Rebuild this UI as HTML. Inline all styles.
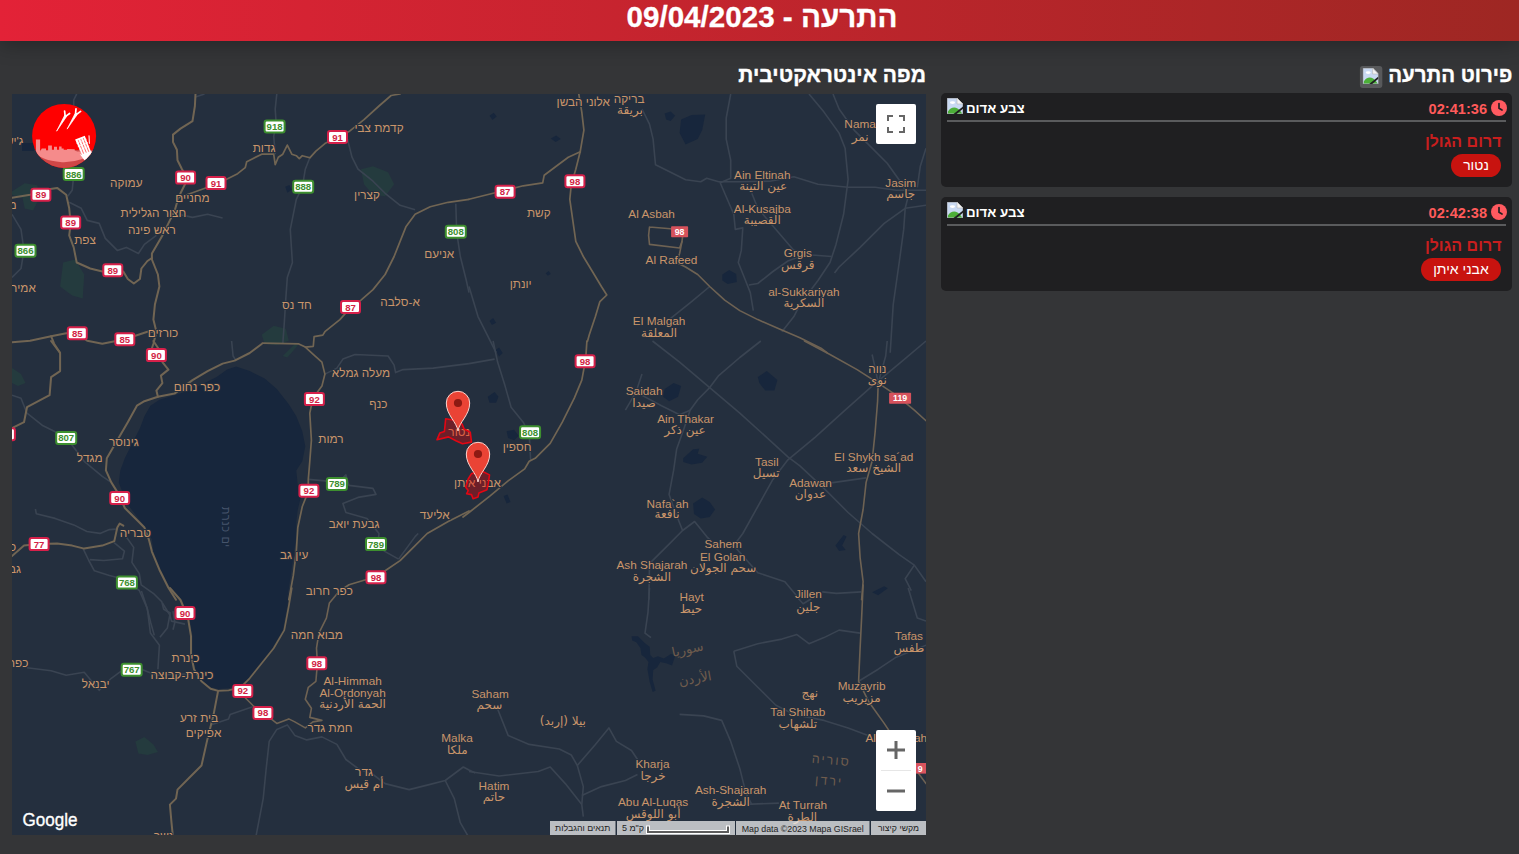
<!DOCTYPE html>
<html lang="he" dir="rtl">
<head>
<meta charset="utf-8">
<title>התרעה - 09/04/2023</title>
<style>
*{box-sizing:border-box;margin:0;padding:0}
html,body{width:1519px;height:854px;overflow:hidden}
body{background:#343537;font-family:"Liberation Sans","DejaVu Sans",sans-serif;color:#fff;position:relative}
#hdr{position:absolute;left:0;top:0;width:1519px;height:41px;background:linear-gradient(90deg,#e32237,#9e2723);box-shadow:0 4px 20px rgba(0,0,0,.28);z-index:5}
#hdr h1{-webkit-text-stroke:.3px #fff;position:absolute;left:0;top:0px;width:1524px;transform:scaleX(1.02);text-align:center;font-size:29px;font-weight:bold;line-height:34px;letter-spacing:0;color:#fff;direction:rtl;white-space:nowrap}
h2{position:absolute;-webkit-text-stroke:.35px #fff;font-size:21px;font-weight:bold;line-height:26px;color:#fff;white-space:nowrap;direction:rtl}
#t-map{right:593px;top:61.5px}
#t-det{right:7px;top:61.5px;transform:scaleX(.975);transform-origin:100% 50%}
.bib{position:absolute;left:-29px;top:4px;width:23px;height:22px;background:#58595b;border-radius:3px}
.bib .bi{position:absolute;left:3px;top:2px}
#map{position:absolute;left:12px;top:94px;width:914px;height:741px;background:#242f3e;overflow:hidden}
#map svg{position:absolute;left:0;top:0}
.card{position:absolute;left:941px;width:571px;background:#1f1f21;border-radius:5px}
.card .hd{position:absolute;left:6px;right:6px;top:0;height:29px;border-bottom:2px solid #5a5b5d}
.card .hd .bi{position:absolute;left:0;top:5px}
.card .clk{position:absolute;right:-1px;top:7px}
.card .tm{position:absolute;right:19px;top:7px;font-size:14.6px;font-weight:bold;color:#ff5a5a;line-height:18px;direction:ltr}
.card .ty{position:absolute;left:19px;top:7px;font-size:13.3px;font-weight:bold;color:#fff;line-height:18px;white-space:nowrap}
.card .ar{position:absolute;right:10.5px;top:39px;font-size:16px;font-weight:bold;color:#c81e1e;line-height:20px;white-space:nowrap}
.card .pill{position:absolute;right:11px;top:61px;height:23px;border-radius:12px;background:#c8130f;color:#fff;font-size:14px;line-height:23px;text-align:center;white-space:nowrap}
</style>
</head>
<body>
<div id="hdr"><h1>התרעה - 09/04/2023</h1></div>
<h2 id="t-map">מפה אינטראקטיבית</h2>
<h2 id="t-det">פירוט התרעה<span class="bib"><svg class="bi" width="16" height="16" viewBox="0 0 16 16"><path d="M0 0H10L16 6V16H0Z" fill="#c9d9f2"/><path d="M0 0H10L16 6V16H0Z" fill="none" stroke="#9a9a9a" stroke-width="1"/><path d="M10 0V6H16Z" fill="#f4f4f4" stroke="#b5b5b5" stroke-width=".6"/><ellipse cx="5.5" cy="4.6" rx="2.6" ry="1.3" fill="#fff"/><path d="M1 15.5V13.5C3 10 7 8.5 10.5 10.5C12.5 11.7 14 13.5 15 15.5Z" fill="#4caf38"/><path d="M6.5 16L16 8.5V10.8L9.6 16Z" fill="#1f1f21"/></svg></span></h2>
<div id="map">
<svg width="914" height="741" viewBox="12 94 914 741" direction="ltr">
<g id="water" fill="#17263c">
<path d="M236.1 366.6 L249.7 371.1 L264.7 378.6 L276.8 389.1 L288.8 404.2 L296.3 416.2 L302.3 431.3 L305.3 446.3 L302.3 461.3 L296.3 470.4 L297.8 485.4 L300.8 497.4 L297.8 509.5 L296.3 521.5 L296.3 536.6 L293.3 557.6 L290.3 578.7 L287.3 597.9 L290.3 588.0 L287.3 606.1 L282.8 630.1 L272.2 648.2 L260.2 663.2 L248.2 678.3 L239.1 685.8 L228.6 688.2 L218.1 689.1 L209.1 686.7 L200.9 679.8 L195.5 669.2 L192.5 654.2 L192.5 636.1 L189.5 618.1 L182.0 600.0 L171.5 588.0 L168.4 584.7 L159.4 566.6 L153.4 551.6 L151.9 539.6 L145.9 527.5 L138.4 518.5 L129.3 506.5 L123.3 494.4 L118.8 482.4 L120.3 470.4 L124.8 458.3 L132.3 443.3 L139.9 428.2 L144.4 416.2 L150.4 405.7 L159.4 399.7 L174.5 395.2 L189.5 390.6 L204.5 383.1 L216.6 377.1 L227.1 369.6Z"/>
<path d="M285.2 186.7 L289.4 184.9 L291.8 189.7 L287.3 192.7Z"/>
<path d="M681.1 119.6 L691.6 115.1 L705.2 114.5 L702.2 130.1 L697.7 139.1 L685.6 144.5 L679.6 133.1Z"/>
<path d="M664.6 113.6 L670.6 111.4 L675.1 115.7 L670.6 121.1 L666.1 119.6Z"/>
<path d="M489.5 115.7 L493.7 112.7 L496.7 116.6 L492.5 119.9Z"/>
<path d="M550.8 138.5 L556.2 135.5 L560.8 139.1 L555.6 142.1Z"/>
<path d="M722.3 274.5 L729.2 270.0 L736.2 273.9 L736.8 282.0 L727.7 284.1 L722.3 280.5Z"/>
<path d="M545.7 273.3 L548.7 270.9 L550.8 273.9 L547.8 275.7Z"/>
<path d="M489.5 321.1 L493.1 318.1 L496.1 322.7 L491.9 325.1Z"/>
<path d="M664.6 389.1 L673.6 383.1 L681.1 386.1 L678.1 396.7 L669.1 401.2 L663.1 396.7Z"/>
<path d="M757.8 377.1 L766.8 371.1 L777.4 380.1 L774.4 390.6 L765.3 390.6 L759.3 383.1Z"/>
<path d="M683.2 458.3 L693.1 449.3 L699.2 448.7 L697.7 453.8 L707.3 456.8 L702.2 462.8 L691.6 464.4 L683.2 461.9Z"/>
<path d="M693.1 503.5 L702.2 497.4 L709.7 502.0 L715.1 509.5 L709.7 517.0 L700.7 518.5 L694.0 514.0Z"/>
<path d="M835.4 545.6 L843.6 535.1 L846.6 536.6 L842.1 545.6 L845.7 550.1 L839.1 551.0Z"/>
<path d="M487.7 396.7 L494.6 392.1 L498.5 396.7 L496.1 402.7 L489.5 402.7Z"/>
<path d="M495.5 350.0 L499.1 347.6 L502.7 353.0 L499.1 356.6Z"/>
<path d="M506.6 431.3 L514.1 429.8 L518.6 435.8 L514.1 440.3 L508.1 437.9Z"/>
<path d="M503.6 495.9 L507.5 494.4 L510.5 502.0 L506.6 503.5Z"/>
<path d="M872.1 592.2 L884.2 586.2 L887.8 588.3 L878.2 595.2Z"/>
<path d="M631.6 636.3 L638.0 636.3 L645.0 643.3 L649.7 646.8 L650.3 655.0 L653.2 658.0 L657.9 656.2 L663.8 658.5 L670.8 653.9 L675.5 655.0 L672.0 665.6 L666.1 663.2 L660.3 662.1 L657.3 667.3 L653.2 670.3 L652.6 679.6 L655.6 690.7 L652.6 691.9 L649.7 682.0 L647.4 669.1 L648.5 662.1 L645.0 657.4 L641.5 655.0 L640.4 648.0 L636.3 642.2 L632.2 640.4Z"/>
</g>
<g fill="none" stroke="#17263c" stroke-width="3.5" stroke-linecap="round" stroke-linejoin="round">
</g>
<g id="parks" fill="#243b3e">
<path d="M361.0 169.2 L373.0 166.2 L388.1 172.2 L394.1 184.3 L385.1 196.3 L373.0 194.8 L364.0 184.3Z"/>
<path d="M63.1 262.5 L75.2 259.5 L84.2 274.5 L82.7 298.6 L72.2 295.6 L60.1 286.5Z"/>
<path d="M12.0 191.6 L24.7 183.2 L37.3 185.3 L39.4 198.0 L33.1 210.6 L24.7 208.5 L22.5 198.0 L12.0 194.8Z"/>
<path d="M261.7 334.7 L273.7 325.7 L285.8 328.7 L288.8 340.7 L276.8 345.2 L264.7 343.7Z"/>
<path d="M12.0 368.1 L21.0 374.1 L25.5 383.1 L18.0 386.1 L12.0 383.1Z"/>
<path d="M282.8 356.0 L294.8 344.0 L297.8 345.5 L287.3 357.5Z"/>
<path d="M135.4 741.4 L144.4 736.9 L153.4 744.4 L157.9 752.0 L147.4 755.0 L138.4 753.5Z"/>
</g>
<g id="minor" fill="none" stroke="#3a4452" stroke-width="1.6" stroke-linejoin="round">
<path d="M276.8 94.0 L275.2 109.0 L276.2 124.1 L273.7 136.1 L275.2 154.2"/>
<path d="M309.8 157.8 L305.3 169.2 L302.3 187.3 L296.3 199.3 L293.3 214.3 L290.3 229.4 L291.2 244.4 L292.4 262.5 L287.3 277.5 L285.8 298.6 L284.3 322.7 L282.8 343.7"/>
<path d="M455.8 203.8 L456.7 232.4 L460.3 256.5 L466.3 280.5 L469.0 292.6"/>
<path d="M347.5 139.1 L352.0 157.2 L358.0 169.2 L373.0 181.2 L385.1 193.3 L400.1 205.3 L415.1 209.8"/>
<path d="M76.7 94.0 L73.7 100.0 L73.7 175.2 L72.2 190.3 L67.7 196.3"/>
<path d="M69.2 202.3 L81.2 208.3 L87.2 220.4 L99.2 223.4 L105.3 238.4 L117.3 250.4 L126.3 247.4 L138.4 253.5 L144.4 244.4 L156.4 235.4"/>
<path d="M178.4 214.3 L192.5 217.4 L207.6 214.3 L222.6 218.0"/>
<path d="M12.0 214.3 L21.0 229.4 L24.0 250.4 L21.0 268.5 L12.0 277.5"/>
<path d="M195.5 97.0 L204.5 94.0"/>
<path d="M642.0 109.0 L649.5 124.1 L653.1 139.1 L655.5 164.7 L673.6 173.7 L685.6 179.7 L700.7 181.8 L706.7 178.2 L718.7 181.8 L739.8 181.8 L769.9 181.2 L793.9 176.7 L818.0 184.3 L848.1 187.3 L875.2 187.3 L896.2 190.3 L926.0 190.3"/>
<path d="M730.7 94.0 L726.2 118.1 L726.2 139.1 L730.7 160.2 L730.7 178.2 L720.2 182.8 L724.7 193.3 L733.8 214.3 L735.3 229.4 L742.8 227.9 L741.3 250.4 L738.3 262.5 L744.3 277.5 L750.3 292.6 L753.3 310.6"/>
<path d="M809.0 94.0 L824.0 112.1 L839.1 133.1 L845.1 148.2 L848.1 179.7 L843.6 214.3 L836.0 244.4 L830.0 262.5 L818.0 280.5 L799.9 304.6 L793.9 316.6 L781.9 331.7"/>
<path d="M833.0 94.0 L839.1 109.0 L854.1 130.1 L869.1 145.1 L887.2 163.2 L902.2 184.3 L908.2 196.3 L905.2 208.3"/>
<path d="M751.8 193.3 L757.8 208.3 L775.9 229.4 L793.9 250.4 L812.0 255.0 L831.5 256.5"/>
<path d="M905.2 208.3 L884.2 223.4 L860.1 247.4 L839.1 267.0 L834.5 273.0"/>
<path d="M905.2 208.3 L903.7 229.4 L899.2 262.5 L893.2 304.6 L890.2 352.7"/>
<path d="M905.2 208.3 L926.0 205.3"/>
<path d="M926.0 148.2 L920.3 166.2 L917.3 187.3"/>
<path d="M748.8 285.0 L757.8 283.5 L772.9 271.5 L787.9 261.0 L799.9 256.5"/>
<path d="M709.7 286.5 L691.6 301.6 L676.6 313.6 L661.5 325.7"/>
<path d="M469.0 286.5 L478.0 316.6 L490.1 340.7 L496.1 352.7"/>
<path d="M12.0 395.2 L21.0 398.2 L27.0 413.2 L42.1 425.2 L66.2 437.3 L84.2 461.3 L102.3 476.4 L111.3 482.4"/>
<path d="M308.3 479.4 L324.9 480.9 L336.9 483.9 L345.9 474.9 L349.0 485.4 L373.0 488.4 L376.0 494.4 L358.0 497.4 L342.9 503.5 L345.9 512.5 L367.0 518.5 L379.0 533.5 L377.5 545.6 L385.1 551.6 L398.6 559.1"/>
<path d="M324.9 374.1 L336.9 368.1 L342.9 359.1 L355.0 354.5 L388.1 356.0 L394.1 365.1 L395.6 372.6 L403.1 369.6 L433.2 368.1 L469.0 363.6"/>
<path d="M398.6 559.1 L415.1 536.6 L418.2 533.5"/>
<path d="M231.6 341.0 L233.1 356.0 L236.1 360.6"/>
<path d="M35.4 509.0 L36.3 513.7 L55.1 518.4 L73.8 524.9 L86.9 531.5 L100.0 533.4 L109.4 529.6 L115.9 529.1"/>
<path d="M83.2 548.9 L88.8 560.5 L94.4 570.8 L109.4 575.5 L124.4 579.3 L139.3 590.5 L146.8 607.3 L150.6 622.3 L154.3 635.4"/>
<path d="M114.1 542.7 L124.4 551.2 L122.5 558.7 L103.8 560.5 L89.7 559.6"/>
<path d="M124.4 534.3 L133.7 547.4 L131.9 562.4 L139.3 573.6 L141.2 584.9 L154.3 594.2 L161.8 601.7 L163.7 609.2 L170.2 613.0 L167.4 627.9 L159.9 637.3"/>
<path d="M173.0 611.1 L174.9 622.3 L173.0 629.8"/>
<path d="M652.5 341.0 L679.6 362.1 L709.7 387.6 L739.8 413.2 L769.9 440.3 L787.9 456.8 L799.9 465.9 L824.0 488.4 L848.1 512.5 L872.1 533.5 L899.2 554.6 L914.3 565.1 L926.0 581.7"/>
<path d="M760.8 341.0 L739.8 357.5 L718.7 375.6 L709.7 387.6 L697.7 399.7 L690.1 410.2 L684.1 428.2 L676.6 449.3 L673.6 470.4 L669.1 494.4 L676.6 515.5 L682.6 530.5"/>
<path d="M926.0 341.0 L899.2 363.6 L872.1 386.1 L845.1 410.2 L815.0 437.3 L787.9 459.8 L772.9 479.4 L757.8 506.5 L742.8 533.5 L733.8 545.6"/>
<path d="M642.0 374.1 L636.0 392.1 L625.4 410.2"/>
<path d="M636.0 392.1 L661.5 405.7 L679.6 414.7 L690.1 410.2"/>
<path d="M649.5 563.6 L667.6 545.6 L682.6 530.5 L694.6 521.5 L706.7 536.6 L718.7 548.6"/>
<path d="M824.0 483.9 L845.1 480.9 L866.1 477.9"/>
<path d="M887.2 341.0 L885.7 356.0 L878.2 383.1"/>
<path d="M872.1 354.5 L875.2 368.1 L878.2 383.1"/>
<path d="M493.1 341.0 L497.6 362.1 L505.1 386.1 L511.1 407.2 L523.2 422.2 L529.2 434.3 L530.7 461.3"/>
<path d="M469.0 363.6 L494.6 359.1"/>
<path d="M733.8 545.6 L757.8 572.7 L784.9 581.7 L799.9 599.7"/>
<path d="M914.3 565.1 L905.2 578.7 L911.3 590.7"/>
<path d="M649.5 563.6 L648.9 599.7"/>
<path d="M795.1 595.0 L803.1 603.8 L811.0 599.0"/>
<path d="M822.2 591.9 L836.5 593.4 L861.2 591.9"/>
<path d="M27.0 667.7 L51.1 670.7 L66.2 675.2 L84.2 672.2 L99.2 690.3 L111.3 678.3 L121.8 670.7 L141.4 669.2 L156.4 675.2 L191.0 673.7"/>
<path d="M141.4 591.0 L147.4 609.1 L150.4 633.1 L159.4 645.2 L157.9 669.2"/>
<path d="M162.4 603.0 L169.9 615.1 L171.5 621.1 L185.0 624.1"/>
<path d="M210.6 724.9 L228.6 718.9 L230.1 714.4 L252.7 706.8"/>
<path d="M255.7 837.7 L263.2 798.6 L266.2 768.5 L269.2 741.4 L276.8 729.4 L287.3 724.9 L294.8 735.4 L306.8 739.9 L321.9 736.9 L336.9 744.4 L345.9 759.5 L358.0 768.5 L373.0 774.5 L385.1 783.6 L409.1 789.6 L427.2 785.1 L445.2 780.5 L463.3 767.0 L469.0 770.0 L475.3 773.0"/>
<path d="M445.2 780.5 L454.3 798.6 L460.3 822.7 L469.0 837.7"/>
<path d="M649.5 588.0 L648.0 612.1 L645.0 633.1 L651.0 637.6"/>
<path d="M733.8 651.2 L757.8 643.7 L781.9 639.1 L796.9 634.6 L809.0 643.7 L824.0 637.6 L839.1 630.1 L860.1 633.1"/>
<path d="M733.8 651.2 L736.8 666.2 L757.8 687.3 L775.9 705.3 L793.9 714.4 L824.0 720.4 L848.1 727.9 L872.1 736.9"/>
<path d="M679.6 714.4 L703.7 715.9 L721.7 720.4 L730.7 741.4 L739.8 768.5 L745.8 792.6 L751.8 804.6"/>
<path d="M858.6 681.3 L878.2 669.2 L896.2 657.2 L926.0 645.2"/>
<path d="M496.1 705.3 L508.1 735.4 L529.2 744.4 L559.3 749.0 L571.3 755.0 L577.3 765.5 L583.3 786.6 L581.8 804.6 L583.3 816.7"/>
<path d="M469.0 771.5 L499.1 776.0 L538.2 771.5 L550.2 767.0 L565.3 783.6 L581.8 804.6"/>
<path d="M581.8 795.6 L601.4 786.6 L625.4 780.5 L637.5 774.5"/>
<path d="M577.3 765.5 L595.4 744.4 L608.9 727.9 L616.4 741.4 L631.5 750.5 L637.5 759.5"/>
<path d="M739.8 804.6 L778.9 803.1"/>
<path d="M908.2 588.0 L917.3 618.1 L926.0 621.1"/>
</g>
<g id="major" fill="none" stroke="#716553" stroke-width="2.0" stroke-linejoin="round" stroke-linecap="round">
<path d="M195.5 94.0 L194.9 106.0 L192.5 121.1 L180.5 128.6 L173.0 134.6 L173.0 142.1 L176.9 149.7 L177.5 160.2 L182.0 169.2 L186.5 176.7 L185.0 184.3 L180.5 193.3 L178.4 197.8 L174.5 211.3 L168.4 223.4 L162.4 235.4 L151.9 253.5 L151.9 259.5 L157.9 274.5 L159.4 286.5 L154.9 304.6 L153.4 319.6 L156.4 331.7 L153.4 343.7 L150.4 352.7"/>
<path d="M12.0 197.8 L30.1 194.8 L42.1 190.3 L57.1 187.9 L66.2 194.8 L69.2 208.3 L70.7 223.4 L69.2 235.4 L73.7 247.4 L76.7 262.5 L90.2 268.5 L102.3 271.5 L112.8 270.0 L123.3 271.5 L127.8 279.0 L133.8 283.5 L139.9 279.0 L141.4 268.5 L147.4 261.0 L151.9 258.0"/>
<path d="M12.0 342.2 L30.1 340.7 L51.1 336.2 L66.2 333.2 L76.7 333.2 L87.2 340.7 L102.3 343.7 L124.8 339.2 L138.4 334.7 L147.4 331.7 L154.9 331.7"/>
<path d="M51.1 336.2 L54.1 343.7 L60.1 352.7"/>
<path d="M153.4 341.0 L159.4 350.0 L162.4 362.1 L168.4 369.6 L160.9 375.6 L162.4 383.1 L156.4 390.6 L157.9 396.7 L144.4 401.2 L136.9 405.7 L127.8 422.2 L117.3 440.3 L106.8 458.3 L105.9 470.4 L111.3 482.4 L118.8 494.4 L124.8 508.0 L135.4 518.5 L144.4 527.5 L148.9 539.6 L151.9 551.6 L159.4 569.7 L168.4 587.7 L176.0 599.7"/>
<path d="M157.9 396.7 L174.5 393.6 L192.5 380.1 L207.6 371.1 L222.6 363.6 L234.6 360.6 L249.7 353.0 L261.7 344.0"/>
<path d="M51.1 341.0 L60.1 353.0 L60.1 371.1 L51.1 377.1 L49.6 395.2 L27.0 407.2 L24.0 422.2 L12.0 428.2"/>
<path d="M12.0 556.1 L24.0 545.6 L39.1 544.1 L57.1 543.5 L72.2 545.6 L84.2 548.6 L102.3 545.6 L114.3 541.1 L117.3 527.5 L119.7 523.6 L123.3 525.7"/>
<path d="M169.9 588.0 L180.5 600.0 L188.0 618.1 L191.0 636.1 L191.0 654.2 L194.0 669.2 L201.5 681.3 L210.6 688.8 L218.1 690.9"/>
<path d="M218.1 690.9 L213.6 714.4 L207.6 738.4 L201.5 765.5 L189.5 777.5 L177.5 789.6 L176.0 798.6 L169.9 804.6 L171.5 822.7 L173.0 837.7"/>
</g>
<g id="major2" fill="none" stroke="#716553" stroke-width="1.7" stroke-linejoin="round" stroke-linecap="round">
<path d="M178.4 197.8 L192.5 192.7 L207.6 187.3 L222.6 181.2 L237.6 173.7 L245.2 167.7 L246.7 161.7 L252.7 158.7 L261.7 154.2 L273.7 154.2 L275.2 164.7 L278.3 157.2 L282.8 154.2 L287.3 145.1 L291.8 154.2 L296.3 155.7 L299.3 158.7 L302.3 155.7 L309.8 157.8 L315.9 151.2 L324.9 143.6 L336.9 137.6 L349.0 131.6 L364.0 119.6 L379.0 106.0 L391.1 95.5 L400.1 94.0"/>
<path d="M469.0 199.3 L448.2 202.3 L430.2 206.8 L415.1 214.3 L406.1 226.4 L400.1 241.4 L394.1 256.5 L385.1 274.5 L373.0 289.6 L361.0 300.1 L350.5 307.6 L339.9 319.6 L324.9 331.7 L322.8 335.1 L314.1 336.7 L313.3 346.3 L305.3 347.1 L298.9 343.9 L262.3 343.1"/>
<path d="M578.8 94.0 L581.8 112.1 L583.9 130.1 L580.3 151.2 L575.8 169.2 L571.3 184.3 L569.8 199.3 L572.8 220.4 L575.8 241.4 L583.3 256.5 L592.4 271.5 L601.4 286.5 L606.8 295.0 L599.9 301.6 L595.4 316.6 L589.3 334.7 L587.5 341.3"/>
<path d="M469.0 199.3 L487.1 194.8 L505.1 190.3 L523.2 185.8 L542.7 182.8 L544.2 175.2 L556.2 166.2 L568.3 157.2 L580.3 151.8"/>
<path d="M305.3 347.1 L314.9 355.8 L321.9 362.1 L324.9 374.1 L321.9 386.1 L312.9 398.2 L309.8 413.2 L311.4 440.3 L309.8 461.3 L308.3 479.4 L308.3 491.4 L302.3 506.5 L297.8 527.5 L296.3 551.6 L293.3 575.7 L288.8 599.7"/>
<path d="M469.0 511.0 L448.2 521.5 L427.2 533.5 L412.1 548.6 L400.1 560.6 L386.6 569.7 L376.0 577.2 L364.0 580.2 L349.0 584.7 L339.9 590.7 L336.9 594.0"/>
<path d="M586.9 341.0 L585.7 359.1 L581.8 380.1 L574.3 398.2 L562.3 422.2 L550.2 443.3 L535.2 458.3 L529.2 461.3 L524.7 468.9 L508.1 480.9 L490.1 495.9 L469.0 512.5 L463.0 517.0"/>
<path d="M291.8 588.0 L288.8 606.1 L284.3 630.1 L273.7 648.2 L261.7 663.2 L249.7 678.3 L240.7 687.3 L228.6 690.3 L218.1 690.9"/>
</g>
<g id="major3" fill="none" stroke="#6e6253" stroke-width="1.6" stroke-linejoin="round" stroke-linecap="round">
<path d="M649.5 227.0 L670.6 228.8 L683.2 231.8 L682.0 241.4 L679.6 248.0 L649.5 244.4 L648.6 235.4 L649.5 227.0"/>
<path d="M682.0 241.4 L679.6 253.5 L676.6 262.5 L685.6 267.0 L697.7 274.5 L709.7 286.5 L724.7 300.1 L739.8 310.6 L757.8 319.6 L778.9 328.7 L799.9 337.7 L821.0 348.2 L827.0 352.7"/>
<path d="M804.5 341.0 L830.0 354.5 L857.1 369.6 L878.2 383.1 L896.2 395.2 L914.3 410.2 L926.0 420.7"/>
<path d="M878.2 383.1 L877.6 401.2 L875.2 431.3 L872.1 461.3 L866.1 482.4 L863.1 509.5 L858.6 533.5 L860.1 557.6 L863.1 581.7 L861.6 599.7"/>
<path d="M336.9 594.0 L329.4 603.0 L326.4 618.1 L318.9 633.1 L316.5 648.2 L317.4 663.2 L315.9 681.3 L308.3 687.3 L305.3 699.3 L311.4 708.3 L309.8 717.4 L321.9 720.4 L312.9 721.9 L305.3 727.9 L294.8 721.9 L288.8 718.9 L276.8 723.4 L269.2 717.4 L261.7 712.9 L252.7 705.3 L243.7 696.3 L240.7 688.8"/>
<path d="M863.1 585.0 L861.6 618.1 L860.1 648.2 L858.6 681.3 L869.1 702.3 L884.2 723.4 L890.2 732.4 L908.2 759.5 L926.0 783.6"/>
</g>
<g id="labels" font-size="11.8" fill="#c9956a" text-anchor="middle" stroke="#242f3e" stroke-width="2" paint-order="stroke" stroke-linejoin="round">
<text x="126.3" y="187.0" font-family="Liberation Sans,sans-serif">עמוקה</text>
<text x="192.5" y="202.0" font-family="Liberation Sans,sans-serif">מחניים</text>
<text x="153.4" y="217.0" font-family="Liberation Sans,sans-serif">חצור הגלילית</text>
<text x="151.9" y="234.2" font-family="Liberation Sans,sans-serif">ראש פינה</text>
<text x="85.1" y="244.1" font-family="Liberation Sans,sans-serif">צפת</text>
<text x="264.1" y="151.5" font-family="Liberation Sans,sans-serif">גדות</text>
<text x="379.0" y="131.9" font-family="Liberation Sans,sans-serif">קדמת צבי</text>
<text x="367.0" y="199.3" font-family="Liberation Sans,sans-serif">קצרין</text>
<text x="439.2" y="257.7" font-family="Liberation Sans,sans-serif">אניעם</text>
<text x="296.9" y="308.8" font-family="Liberation Sans,sans-serif">חד נס</text>
<text x="400.1" y="305.8" font-family="Liberation Sans,sans-serif">א-סלבה</text>
<text x="163.0" y="337.4" font-family="Liberation Sans,sans-serif">כורזים</text>
<text x="23.4" y="291.7" font-family="Liberation Sans,sans-serif">אמיר</text>
<text x="14.4" y="145.4" font-family="Liberation Sans,sans-serif">ג'יש</text>
<text x="12.6" y="208.9" font-family="Liberation Sans,sans-serif">מ</text>
<text x="583.3" y="105.7" font-family="Liberation Sans,sans-serif">אלוני הבשן</text>
<text x="629.1" y="102.7" font-family="Liberation Sans,sans-serif">בריקה</text>
<text x="630.0" y="114.0" font-family="DejaVu Sans,sans-serif" font-size="12">بريقة</text>
<text x="762.3" y="178.8" font-family="Liberation Sans,sans-serif" font-size="11.8">Ain Eltinah</text>
<text x="763.2" y="189.9" font-family="DejaVu Sans,sans-serif" font-size="12">عين التينة</text>
<text x="762.3" y="213.1" font-family="Liberation Sans,sans-serif" font-size="11.8">Al-Kusajba</text>
<text x="762.3" y="223.9" font-family="DejaVu Sans,sans-serif" font-size="12">القصيبة</text>
<text x="651.6" y="217.6" font-family="Liberation Sans,sans-serif" font-size="11.8">Al Asbah</text>
<text x="671.5" y="263.7" font-family="Liberation Sans,sans-serif" font-size="11.8">Al Rafeed</text>
<text x="797.8" y="256.5" font-family="Liberation Sans,sans-serif" font-size="11.8">Grgis</text>
<text x="797.8" y="269.0" font-family="DejaVu Sans,sans-serif" font-size="12">قرقس</text>
<text x="803.9" y="295.9" font-family="Liberation Sans,sans-serif" font-size="11.8">al-Sukkariyah</text>
<text x="803.9" y="306.6" font-family="DejaVu Sans,sans-serif" font-size="12">السكرية</text>
<text x="659.1" y="325.3" font-family="Liberation Sans,sans-serif" font-size="11.8">El Malgah</text>
<text x="659.1" y="336.7" font-family="DejaVu Sans,sans-serif" font-size="12">المعلقة</text>
<text x="860.1" y="128.3" font-family="Liberation Sans,sans-serif" font-size="11.8">Nama</text>
<text x="860.1" y="141.1" font-family="DejaVu Sans,sans-serif" font-size="12">نمر</text>
<text x="900.7" y="187.0" font-family="Liberation Sans,sans-serif" font-size="11.8">Jasim</text>
<text x="900.7" y="198.3" font-family="DejaVu Sans,sans-serif" font-size="12">جاسم</text>
<text x="538.8" y="217.0" font-family="Liberation Sans,sans-serif">קשת</text>
<text x="520.7" y="287.7" font-family="Liberation Sans,sans-serif">יונתן</text>
<text x="197.0" y="390.9" font-family="Liberation Sans,sans-serif">כפר נחום</text>
<text x="123.9" y="446.0" font-family="Liberation Sans,sans-serif">גינוסר</text>
<text x="89.6" y="461.6" font-family="Liberation Sans,sans-serif">מגדל</text>
<text x="135.4" y="536.8" font-family="Liberation Sans,sans-serif">טבריה</text>
<text x="361.0" y="376.8" font-family="Liberation Sans,sans-serif">מעלה גמלא</text>
<text x="378.4" y="407.8" font-family="Liberation Sans,sans-serif">כנף</text>
<text x="330.9" y="443.0" font-family="Liberation Sans,sans-serif">רמות</text>
<text x="354.1" y="527.8" font-family="Liberation Sans,sans-serif">גבעת יואב</text>
<text x="294.2" y="559.4" font-family="Liberation Sans,sans-serif">עין גב</text>
<text x="434.7" y="518.8" font-family="Liberation Sans,sans-serif">אליעד</text>
<text x="329.4" y="594.9" font-family="Liberation Sans,sans-serif">כפר חרוב</text>
<text x="9.6" y="551.3" font-family="Liberation Sans,sans-serif">כפ</text>
<text x="15.0" y="572.9" font-family="Liberation Sans,sans-serif">גב</text>
<text x="644.1" y="395.4" font-family="Liberation Sans,sans-serif" font-size="11.8">Saidah</text>
<text x="644.1" y="407.1" font-family="DejaVu Sans,sans-serif" font-size="12">صيدا</text>
<text x="685.6" y="422.8" font-family="Liberation Sans,sans-serif" font-size="11.8">Ain Thakar</text>
<text x="685.0" y="434.2" font-family="DejaVu Sans,sans-serif" font-size="12">عين ذكر</text>
<text x="766.8" y="465.5" font-family="Liberation Sans,sans-serif" font-size="11.8">Tasil</text>
<text x="766.2" y="476.9" font-family="DejaVu Sans,sans-serif" font-size="12">تسيل</text>
<text x="810.5" y="486.6" font-family="Liberation Sans,sans-serif" font-size="11.8">Adawan</text>
<text x="810.5" y="497.9" font-family="DejaVu Sans,sans-serif" font-size="12">عدوان</text>
<text x="873.7" y="460.7" font-family="Liberation Sans,sans-serif" font-size="11.8">El Shykh sa´ad</text>
<text x="873.7" y="472.4" font-family="DejaVu Sans,sans-serif" font-size="12">الشيخ سعد</text>
<text x="667.6" y="507.7" font-family="Liberation Sans,sans-serif" font-size="11.8">Nafa`ah</text>
<text x="667.0" y="518.4" font-family="DejaVu Sans,sans-serif" font-size="12">نافعة</text>
<text x="723.2" y="548.3" font-family="Liberation Sans,sans-serif" font-size="11.8">Sahem</text>
<text x="722.6" y="560.6" font-family="Liberation Sans,sans-serif" font-size="11.8">El Golan</text>
<text x="723.2" y="572.2" font-family="DejaVu Sans,sans-serif" font-size="12">سحم الجولان</text>
<text x="651.9" y="569.3" font-family="Liberation Sans,sans-serif" font-size="11.8">Ash Shajarah</text>
<text x="651.9" y="581.3" font-family="DejaVu Sans,sans-serif" font-size="12">الشجرة</text>
<text x="877.3" y="372.9" font-family="Liberation Sans,sans-serif">נווה</text>
<text x="877.3" y="383.6" font-family="DejaVu Sans,sans-serif" font-size="12">نوى</text>
<text x="517.1" y="450.5" font-family="Liberation Sans,sans-serif">חספין</text>
<text x="459.2" y="435.7" font-family="Liberation Sans,sans-serif">נטור</text>
<text x="477.5" y="487.3" font-family="Liberation Sans,sans-serif">אבני איתן</text>
<text x="316.8" y="639.4" font-family="Liberation Sans,sans-serif">מבוא חמה</text>
<text x="185.6" y="662.0" font-family="Liberation Sans,sans-serif">כינרת</text>
<text x="182.0" y="678.8" font-family="Liberation Sans,sans-serif">כינרת-קבוצה</text>
<text x="95.6" y="687.9" font-family="Liberation Sans,sans-serif">יבנאל</text>
<text x="18.6" y="666.5" font-family="Liberation Sans,sans-serif">כפר</text>
<text x="199.1" y="722.2" font-family="Liberation Sans,sans-serif">בית זרע</text>
<text x="203.6" y="736.9" font-family="Liberation Sans,sans-serif">אפיקים</text>
<text x="352.6" y="684.6" font-family="Liberation Sans,sans-serif" font-size="11.8">Al-Himmah</text>
<text x="352.6" y="696.6" font-family="Liberation Sans,sans-serif" font-size="11.8">Al-Ordonyah</text>
<text x="352.6" y="707.9" font-family="DejaVu Sans,sans-serif" font-size="12">الحمة الأردنية</text>
<text x="330.0" y="731.8" font-family="Liberation Sans,sans-serif">חמת גדר</text>
<text x="364.0" y="775.7" font-family="Liberation Sans,sans-serif">גדר</text>
<text x="364.0" y="787.7" font-family="DejaVu Sans,sans-serif" font-size="12">أم قيس</text>
<text x="457.0" y="742.0" font-family="Liberation Sans,sans-serif" font-size="11.8">Malka</text>
<text x="457.3" y="754.0" font-family="DejaVu Sans,sans-serif" font-size="12">ملكا</text>
<text x="163.9" y="839.5" font-family="Liberation Sans,sans-serif">גשר</text>
<text x="691.6" y="601.2" font-family="Liberation Sans,sans-serif" font-size="11.8">Hayt</text>
<text x="691.0" y="613.2" font-family="DejaVu Sans,sans-serif" font-size="12">حيط</text>
<text x="808.4" y="598.2" font-family="Liberation Sans,sans-serif" font-size="11.8">Jillen</text>
<text x="808.4" y="610.5" font-family="DejaVu Sans,sans-serif" font-size="12">جلين</text>
<text x="908.9" y="640.3" font-family="Liberation Sans,sans-serif" font-size="11.8">Tafas</text>
<text x="908.9" y="652.3" font-family="DejaVu Sans,sans-serif" font-size="12">طفس</text>
<text x="490.1" y="697.5" font-family="Liberation Sans,sans-serif" font-size="11.8">Saham</text>
<text x="489.5" y="709.4" font-family="DejaVu Sans,sans-serif" font-size="12">سحم</text>
<text x="562.9" y="724.8" font-family="DejaVu Sans,sans-serif" font-size="12">بيلا (إربد)</text>
<text x="861.6" y="689.7" font-family="Liberation Sans,sans-serif" font-size="11.8">Muzayrib</text>
<text x="861.6" y="701.6" font-family="DejaVu Sans,sans-serif" font-size="12">مزيريب</text>
<text x="809.9" y="696.8" font-family="DejaVu Sans,sans-serif" font-size="12">نهج</text>
<text x="797.8" y="715.6" font-family="Liberation Sans,sans-serif" font-size="11.8">Tal Shihab</text>
<text x="797.8" y="727.5" font-family="DejaVu Sans,sans-serif" font-size="12">تلشهاب</text>
<text x="652.5" y="768.2" font-family="Liberation Sans,sans-serif" font-size="11.8">Kharja</text>
<text x="653.1" y="780.1" font-family="DejaVu Sans,sans-serif" font-size="12">خرجا</text>
<text x="494.0" y="789.6" font-family="Liberation Sans,sans-serif" font-size="11.8">Hatim</text>
<text x="494.0" y="800.6" font-family="DejaVu Sans,sans-serif" font-size="12">حاتم</text>
<text x="730.7" y="794.4" font-family="Liberation Sans,sans-serif" font-size="11.8">Ash-Shajarah</text>
<text x="730.7" y="805.7" font-family="DejaVu Sans,sans-serif" font-size="12">الشجرة</text>
<text x="653.1" y="805.8" font-family="Liberation Sans,sans-serif" font-size="11.8">Abu Al-Luqas</text>
<text x="653.1" y="817.7" font-family="DejaVu Sans,sans-serif" font-size="12">أبو اللوقس</text>
<text x="802.9" y="809.4" font-family="Liberation Sans,sans-serif" font-size="11.8">At Turrah</text>
<text x="802.3" y="820.8" font-family="DejaVu Sans,sans-serif" font-size="12">الطرة</text>
<text x="896.2" y="741.7" font-family="Liberation Sans,sans-serif" font-size="11.8">Al-Shajarah</text>
</g>
<g id="shields" font-family="Liberation Sans,sans-serif" font-size="9.6" font-weight="bold" text-anchor="middle">
<rect x="63.7" y="168.0" width="20" height="12" rx="2.2" fill="#fff" stroke="#3d8f2f" stroke-width="2"/><text x="73.7" y="177.5" fill="#3d8f2f">886</text>
<rect x="31.4" y="188.8" width="19" height="12" rx="2.2" fill="#fff" stroke="#d6204a" stroke-width="2"/><text x="40.9" y="198.3" fill="#d21f45">89</text>
<rect x="61.2" y="216.5" width="19" height="12" rx="2.2" fill="#fff" stroke="#d6204a" stroke-width="2"/><text x="70.7" y="226.0" fill="#d21f45">89</text>
<rect x="15.5" y="244.7" width="20" height="12" rx="2.2" fill="#fff" stroke="#3d8f2f" stroke-width="2"/><text x="25.5" y="254.2" fill="#3d8f2f">866</text>
<rect x="103.3" y="264.3" width="19" height="12" rx="2.2" fill="#fff" stroke="#d6204a" stroke-width="2"/><text x="112.8" y="273.8" fill="#d21f45">89</text>
<rect x="176.1" y="171.6" width="19" height="12" rx="2.2" fill="#fff" stroke="#d6204a" stroke-width="2"/><text x="185.6" y="181.1" fill="#d21f45">90</text>
<rect x="206.5" y="177.1" width="19" height="12" rx="2.2" fill="#fff" stroke="#d6204a" stroke-width="2"/><text x="216.0" y="186.6" fill="#d21f45">91</text>
<rect x="264.6" y="120.5" width="20" height="12" rx="2.2" fill="#fff" stroke="#3d8f2f" stroke-width="2"/><text x="274.6" y="130.0" fill="#3d8f2f">918</text>
<rect x="293.2" y="180.7" width="20" height="12" rx="2.2" fill="#fff" stroke="#3d8f2f" stroke-width="2"/><text x="303.2" y="190.2" fill="#3d8f2f">888</text>
<rect x="328.0" y="131.0" width="19" height="12" rx="2.2" fill="#fff" stroke="#d6204a" stroke-width="2"/><text x="337.5" y="140.5" fill="#d21f45">91</text>
<rect x="445.8" y="225.8" width="20" height="12" rx="2.2" fill="#fff" stroke="#3d8f2f" stroke-width="2"/><text x="455.8" y="235.3" fill="#3d8f2f">808</text>
<rect x="341.0" y="301.0" width="19" height="12" rx="2.2" fill="#fff" stroke="#d6204a" stroke-width="2"/><text x="350.5" y="310.5" fill="#d21f45">87</text>
<rect x="67.8" y="327.2" width="19" height="12" rx="2.2" fill="#fff" stroke="#d6204a" stroke-width="2"/><text x="77.3" y="336.7" fill="#d21f45">85</text>
<rect x="115.3" y="333.2" width="19" height="12" rx="2.2" fill="#fff" stroke="#d6204a" stroke-width="2"/><text x="124.8" y="342.7" fill="#d21f45">85</text>
<rect x="146.9" y="349.1" width="19" height="12" rx="2.2" fill="#fff" stroke="#d6204a" stroke-width="2"/><text x="156.4" y="358.6" fill="#d21f45">90</text>
<rect x="495.6" y="185.8" width="19" height="12" rx="2.2" fill="#fff" stroke="#d6204a" stroke-width="2"/><text x="505.1" y="195.3" fill="#d21f45">87</text>
<rect x="565.4" y="175.2" width="19" height="12" rx="2.2" fill="#fff" stroke="#d6204a" stroke-width="2"/><text x="574.9" y="184.7" fill="#d21f45">98</text>
<rect x="671.1" y="226.3" width="17" height="11" rx=".8" fill="#d6525c"/><text x="679.6" y="235.0" fill="#fff" font-size="8.8">98</text>
<rect x="56.2" y="431.9" width="20" height="12" rx="2.2" fill="#fff" stroke="#3d8f2f" stroke-width="2"/><text x="66.2" y="441.4" fill="#3d8f2f">807</text>
<rect x="110.2" y="492.0" width="19" height="12" rx="2.2" fill="#fff" stroke="#d6204a" stroke-width="2"/><text x="119.7" y="501.5" fill="#d21f45">90</text>
<rect x="29.6" y="538.1" width="19" height="12" rx="2.2" fill="#fff" stroke="#d6204a" stroke-width="2"/><text x="39.1" y="547.6" fill="#d21f45">77</text>
<rect x="116.9" y="576.6" width="20" height="12" rx="2.2" fill="#fff" stroke="#3d8f2f" stroke-width="2"/><text x="126.9" y="586.1" fill="#3d8f2f">768</text>
<rect x="304.9" y="393.1" width="19" height="12" rx="2.2" fill="#fff" stroke="#d6204a" stroke-width="2"/><text x="314.4" y="402.6" fill="#d21f45">92</text>
<rect x="299.4" y="484.8" width="19" height="12" rx="2.2" fill="#fff" stroke="#d6204a" stroke-width="2"/><text x="308.9" y="494.3" fill="#d21f45">92</text>
<rect x="326.9" y="477.9" width="20" height="12" rx="2.2" fill="#fff" stroke="#3d8f2f" stroke-width="2"/><text x="336.9" y="487.4" fill="#3d8f2f">789</text>
<rect x="366.0" y="538.1" width="20" height="12" rx="2.2" fill="#fff" stroke="#3d8f2f" stroke-width="2"/><text x="376.0" y="547.6" fill="#3d8f2f">789</text>
<rect x="366.5" y="571.2" width="19" height="12" rx="2.2" fill="#fff" stroke="#d6204a" stroke-width="2"/><text x="376.0" y="580.7" fill="#d21f45">98</text>
<rect x="-4.1" y="428.3" width="19" height="12" rx="2.2" fill="#fff" stroke="#d6204a" stroke-width="2"/><text x="5.4" y="437.8" fill="#d21f45">65</text>
<rect x="575.6" y="355.2" width="19" height="12" rx="2.2" fill="#fff" stroke="#d6204a" stroke-width="2"/><text x="585.1" y="364.7" fill="#d21f45">98</text>
<rect x="520.1" y="426.2" width="20" height="12" rx="2.2" fill="#fff" stroke="#3d8f2f" stroke-width="2"/><text x="530.1" y="435.7" fill="#3d8f2f">808</text>
<rect x="889.1" y="392.7" width="22" height="11" rx=".8" fill="#d6525c"/><text x="900.1" y="401.4" fill="#fff" font-size="8.8">119</text>
<rect x="175.5" y="607.0" width="19" height="12" rx="2.2" fill="#fff" stroke="#d6204a" stroke-width="2"/><text x="185.0" y="616.5" fill="#d21f45">90</text>
<rect x="121.7" y="663.8" width="20" height="12" rx="2.2" fill="#fff" stroke="#3d8f2f" stroke-width="2"/><text x="131.7" y="673.3" fill="#3d8f2f">767</text>
<rect x="233.3" y="684.9" width="19" height="12" rx="2.2" fill="#fff" stroke="#d6204a" stroke-width="2"/><text x="242.8" y="694.4" fill="#d21f45">92</text>
<rect x="253.4" y="706.9" width="19" height="12" rx="2.2" fill="#fff" stroke="#d6204a" stroke-width="2"/><text x="262.9" y="716.4" fill="#d21f45">98</text>
<rect x="307.3" y="657.2" width="19" height="12" rx="2.2" fill="#fff" stroke="#d6204a" stroke-width="2"/><text x="316.8" y="666.7" fill="#d21f45">98</text>
</g>
<g id="country" fill="#6f5c4d" text-anchor="middle" font-size="12">
<text x="687.5" y="653.5" font-family="DejaVu Sans,sans-serif" font-size="13.2" transform="rotate(-12 688.5 649.5)">سوريا</text>
<text x="695.2" y="683" font-family="DejaVu Sans,sans-serif" font-size="13.2" transform="rotate(-10 695.2 679)">الأردن</text>
<text x="831.3" y="764.5" font-family="Liberation Sans,sans-serif" font-size="12.5" letter-spacing="2" transform="rotate(5 831.3 760)">סוריה</text>
<text x="829.2" y="785" font-family="Liberation Sans,sans-serif" font-size="12.5" letter-spacing="2" transform="rotate(5 829.2 780.6)">ירדן</text>
</g>
<text x="225.7" y="531" transform="rotate(90 225.7 527.3)" text-anchor="middle" font-family="Liberation Sans,sans-serif" font-size="11" letter-spacing=".7" fill="#46546b">ים כנרת</text>
<g id="polys" fill="rgba(255,0,0,0.33)" stroke="#e30613" stroke-width="1.6" stroke-linejoin="round">
<path d="M445.7 418.7L453 420L462.1 424.1L464.1 429L470.3 432.3L471.5 442.1L462.5 443.8L455.9 440.8L448.5 436.9L437 439.7L439.8 433.1L444.4 431.5Z"/>
<path d="M471.5 473.6L482.1 471.3L489.5 474.9L488.4 483.1L487 489.7L478.9 493L478 497L473.1 498.7L471.5 494.6L466.6 493.8L468.2 490.5L465.7 487.2L468.2 479Z"/>
</g>
<g id="pins">
<g transform="translate(458 431)"><path d="M0 0C-1.2-9-11.7-16-11.7-28A11.7 11.7 0 1 1 11.7-28C11.7-16 1.2-9 0 0Z" fill="#ea4335" stroke="#fbd5cf" stroke-width="1"/><circle cx="0" cy="-28" r="4.1" fill="#8d1a13"/></g>
<g transform="translate(478 482)"><path d="M0 0C-1.2-9-11.7-16-11.7-28A11.7 11.7 0 1 1 11.7-28C11.7-16 1.2-9 0 0Z" fill="#ea4335" stroke="#fbd5cf" stroke-width="1"/><circle cx="0" cy="-28" r="4.1" fill="#8d1a13"/></g>
</g>
<g id="logo">
<clipPath id="lc"><circle cx="64.1" cy="135.9" r="32"/></clipPath>
<rect x="22" y="143" width="12" height="8" fill="#17263c"/>
<circle cx="64.1" cy="135.9" r="32" fill="#ff0000"/>
<g clip-path="url(#lc)">
<rect x="30" y="150" width="70" height="20" fill="#cf4747"/>
<path d="M30 152L35.9 152L35.9 139.6L40.1 139.6L40.1 151.4L41.8 148.5L46 148.5L46 150.6L48.1 150.6L48.1 145.5L51.9 145.5L51.9 149.7L54 149.7L54 146.8L57 146.8L57 149.7L59.1 149.7L59.1 146.4L61.6 146.4L61.6 148.5L63.7 148.5L63.7 149.7L67.1 149.7L67.1 148.9L74.7 149.3L74.7 150.6L77.2 151.4L98 151L98 152Q90 158 82.3 159Q72 162.6 62 162.2Q50 161 45.2 159Q36 156 30 150Z" fill="#f58b8b"/>
<path d="M75.1 139.6L84.8 135.8L91.1 151.9L96 150L92 156L84.8 160.7L79.7 154L82 155Z" fill="#fff"/>
<g stroke="#ff4545" stroke-width=".8" fill="none"><path d="M78.2 140.2L83.6 153.6M80.8 139.2L86.3 152.6M83.3 138.2L88.8 151.8"/></g>
<g stroke="#fff" stroke-width=".7" fill="none"><path d="M76.3 143.2L86.6 139.2M77.8 146.6L88 142.6M79.2 150L89.3 146"/></g>
<path d="M89 135.4L89.4 143.8" stroke="#fff" stroke-width="1"/>
</g>
<path d="M56.6 131.2L66.8 116.2L64.8 115.0Z" fill="#fff" stroke="#fff" stroke-width=".7" stroke-linejoin="round"/><path d="M65.2 116.6L64.6 111.0M65.2 116.6L69.6 113.5" stroke="#fff" stroke-width="1.7" fill="none" stroke-linecap="round"/>
<path d="M67.1 129.1L77.0 114.9L75.0 113.7Z" fill="#fff" stroke="#fff" stroke-width=".7" stroke-linejoin="round"/><path d="M75.4 115.3L76.0 108.9M75.4 115.3L80.6 111.4" stroke="#fff" stroke-width="1.7" fill="none" stroke-linecap="round"/>
</g>
<rect x="906" y="763" width="21" height="10.6" fill="#d9545e"/><text x="920.2" y="771.6" font-family="Liberation Sans,sans-serif" font-size="8.8" font-weight="bold" fill="#fff" text-anchor="middle">9</text>
<g id="ctrl">
<rect x="876" y="104" width="40" height="40" rx="2" fill="#fff"/>
<path d="M888 121V116H893M899 116H904V121M904 127V132H899M893 132H888V127" fill="none" stroke="#666" stroke-width="2"/>
<rect x="876" y="730" width="40" height="81" rx="2" fill="#fff"/>
<rect x="881" y="770" width="30" height="1" fill="#e6e6e6"/>
<path d="M887 750H905M896 741V759M887 791H905" stroke="#666" stroke-width="3" fill="none"/>
</g>
<text x="22.5" y="826.3" font-family="Liberation Sans,sans-serif" font-size="18.5" fill="#fff" stroke="#fff" stroke-width=".35" textLength="55" lengthAdjust="spacingAndGlyphs">Google</text>
<g id="bar" font-family="Liberation Sans,sans-serif" font-size="10" fill="#222">
<rect x="550" y="821" width="65.5" height="14" fill="#f5f5f5" fill-opacity=".72"/>
<rect x="617" y="821" width="118" height="14" fill="#f5f5f5" fill-opacity=".72"/>
<rect x="736" y="821" width="133.5" height="14" fill="#f5f5f5" fill-opacity=".72"/>
<rect x="871" y="821" width="55" height="14" fill="#f5f5f5" fill-opacity=".72"/>
<text x="582.7" y="831.3" text-anchor="middle" font-size="8.8">תנאים והגבלות</text>
<text x="633" y="831.3" text-anchor="middle" font-size="9">5 ק"מ</text>
<path d="M648 825.5V832H728V825.5" fill="none" stroke="#fff" stroke-width="4"/>
<path d="M648 826.5V832H728V826.5" fill="none" stroke="#5d5d5d" stroke-width="2"/>
<text x="802.7" y="831.5" text-anchor="middle" font-size="9.3" textLength="122" lengthAdjust="spacingAndGlyphs">Map data ©2023 Mapa GISrael</text>
<text x="898.5" y="831.3" text-anchor="middle" font-size="8.7">מקשי קיצור</text>
</g>

</svg>
</div>
<div class="card" style="top:93px;height:94px">
  <div class="hd"><svg class="clk" width="16" height="16" viewBox="0 0 16 16"><circle cx="8" cy="8" r="8" fill="#ff5a60"/><path d="M8 3.6V8.3L11 10" fill="none" stroke="#1f1f21" stroke-width="1.7" stroke-linecap="round" stroke-linejoin="round"/></svg><svg class="bi" width="16" height="16" viewBox="0 0 16 16"><path d="M0 0H10L16 6V16H0Z" fill="#c9d9f2"/><path d="M0 0H10L16 6V16H0Z" fill="none" stroke="#9a9a9a" stroke-width="1"/><path d="M10 0V6H16Z" fill="#f4f4f4" stroke="#b5b5b5" stroke-width=".6"/><ellipse cx="5.5" cy="4.6" rx="2.6" ry="1.3" fill="#fff"/><path d="M1 15.5V13.5C3 10 7 8.5 10.5 10.5C12.5 11.7 14 13.5 15 15.5Z" fill="#4caf38"/><path d="M6.5 16L16 8.5V10.8L9.6 16Z" fill="#1f1f21"/></svg><span class="tm">02:41:36</span><span class="ty">צבע אדום</span></div>
  <div class="ar">דרום הגולן</div>
  <div class="pill" style="width:50px">נטור</div>
</div>
<div class="card" style="top:197px;height:94px">
  <div class="hd"><svg class="clk" width="16" height="16" viewBox="0 0 16 16"><circle cx="8" cy="8" r="8" fill="#ff5a60"/><path d="M8 3.6V8.3L11 10" fill="none" stroke="#1f1f21" stroke-width="1.7" stroke-linecap="round" stroke-linejoin="round"/></svg><svg class="bi" width="16" height="16" viewBox="0 0 16 16"><path d="M0 0H10L16 6V16H0Z" fill="#c9d9f2"/><path d="M0 0H10L16 6V16H0Z" fill="none" stroke="#9a9a9a" stroke-width="1"/><path d="M10 0V6H16Z" fill="#f4f4f4" stroke="#b5b5b5" stroke-width=".6"/><ellipse cx="5.5" cy="4.6" rx="2.6" ry="1.3" fill="#fff"/><path d="M1 15.5V13.5C3 10 7 8.5 10.5 10.5C12.5 11.7 14 13.5 15 15.5Z" fill="#4caf38"/><path d="M6.5 16L16 8.5V10.8L9.6 16Z" fill="#1f1f21"/></svg><span class="tm">02:42:38</span><span class="ty">צבע אדום</span></div>
  <div class="ar">דרום הגולן</div>
  <div class="pill" style="width:80px">אבני איתן</div>
</div>
</body>
</html>
